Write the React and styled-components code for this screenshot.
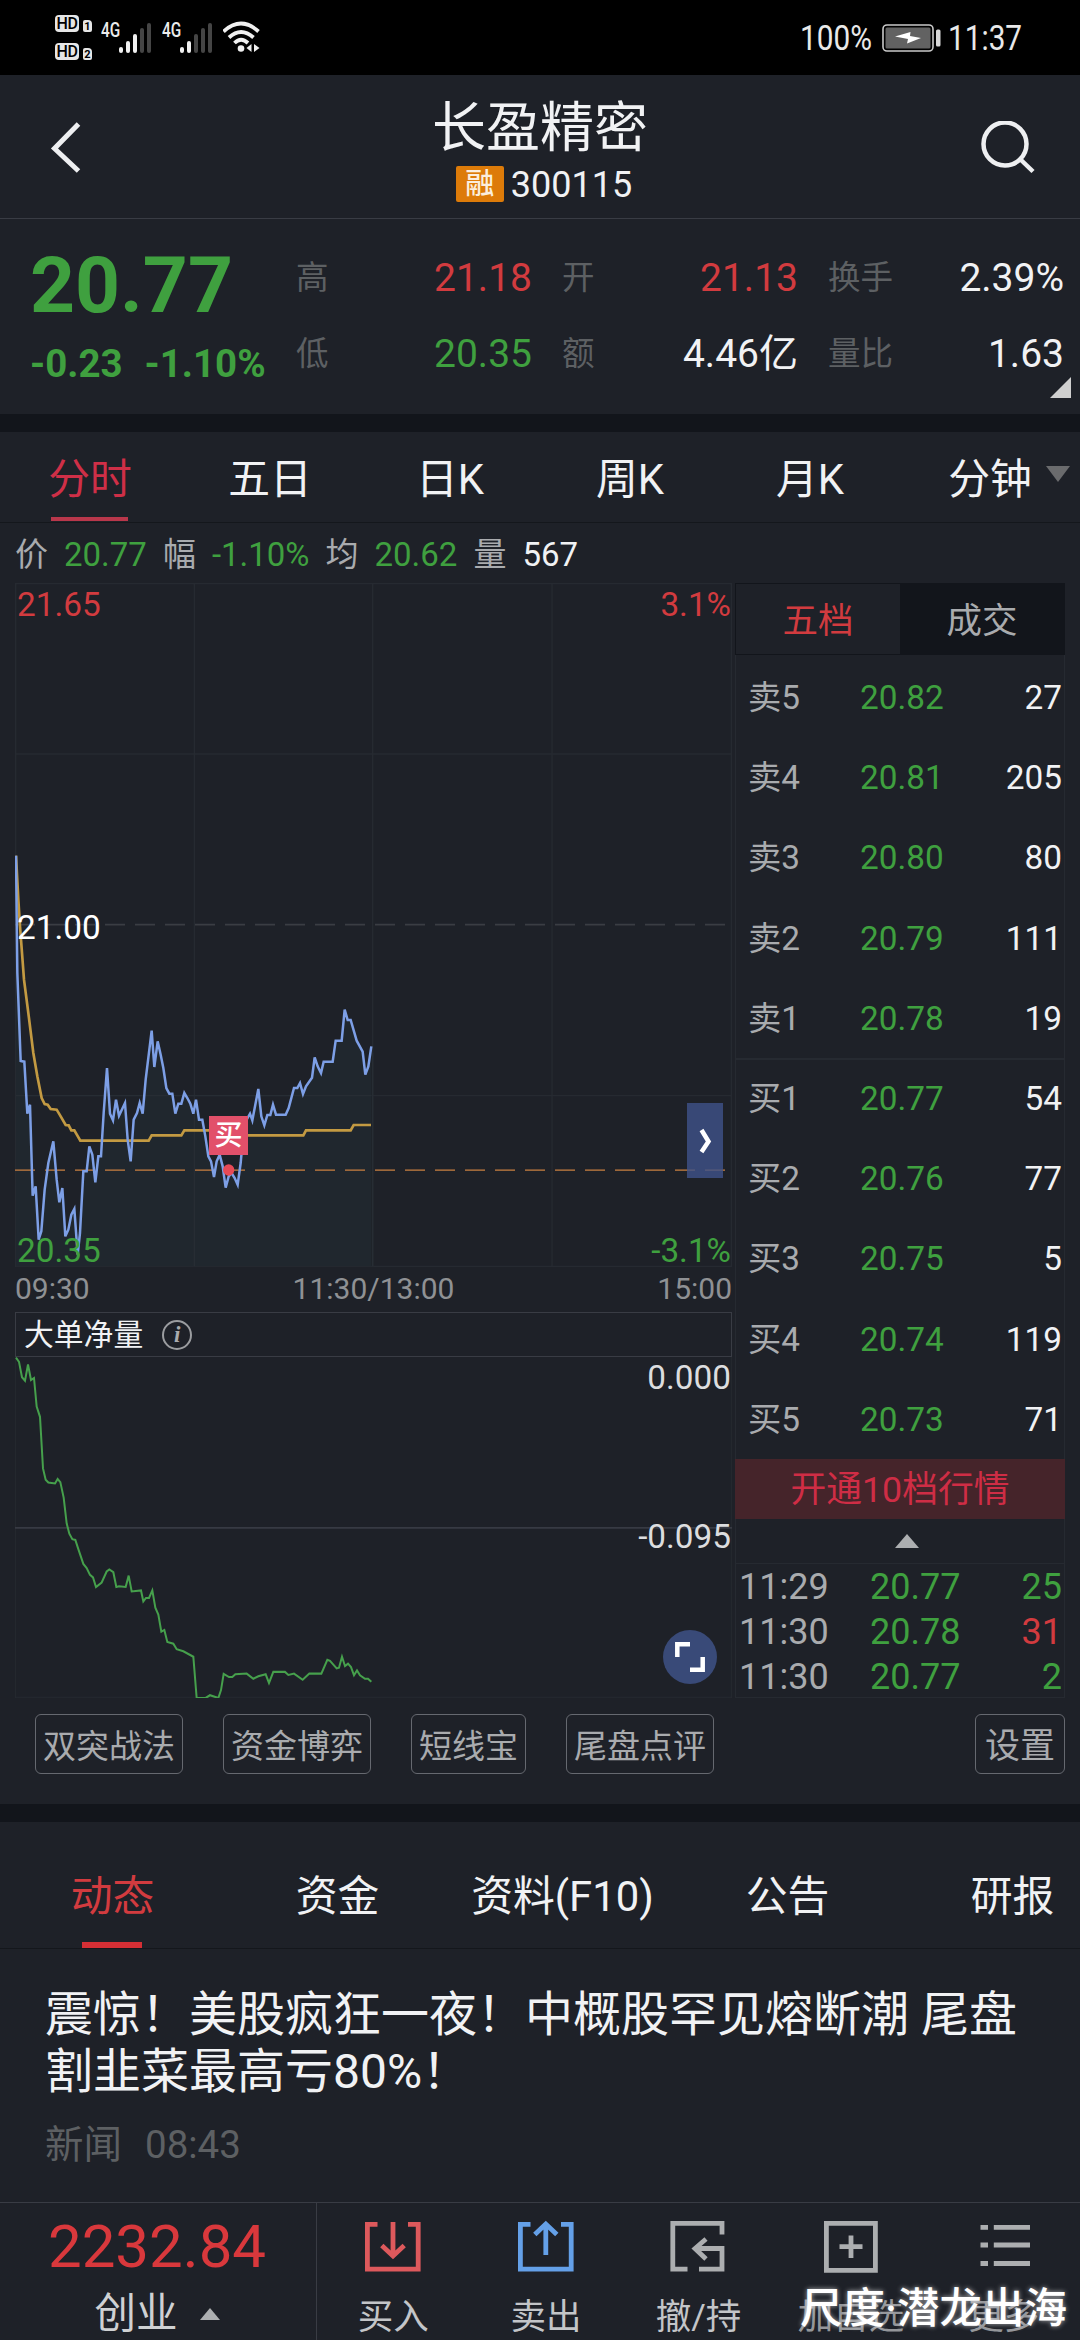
import React from "react";
import styled, { createGlobalStyle } from "styled-components";

const C = {
  bg: "#1e2128",
  band: "#12151b",
  green: "#3fa03f",
  red: "#d23b3f",
  white: "#f1f2f4",
  grey: "#a9abae",
  dim: "#5d6063",
  grid: "#262a31",
  line: "#393c44",
};

const Global = createGlobalStyle`
  * { box-sizing: border-box; }
  body { margin: 0; background: ${C.bg}; }
`;

const Page = styled.main`
  width: 1080px;
  height: 2340px;
  overflow: hidden;
  display: flex;
  flex-direction: column;
  background: ${C.bg};
  color: ${C.white};
  font-family: Roboto, "Noto Sans CJK SC", sans-serif;
  line-height: 1;
  white-space: nowrap;
  svg { display: block; flex: none; }
`;

/* ---------- status bar ---------- */

const StatusBar = styled.header`
  height: 75px;
  flex: none;
  background: #000;
  display: flex;
  justify-content: space-between;
  padding: 0 56px 0 55px;
`;

const StatusLeft = styled.div`
  display: flex;
  padding-top: 15px;
`;

const HdStack = styled.div`
  display: flex;
  flex-direction: column;
  gap: 11px;
  width: 46px;
`;

const HdRow = styled.div`
  display: flex;
  gap: 4px;
  align-items: flex-end;
`;

const HdBox = styled.span`
  width: 24px;
  height: 17px;
  border-radius: 4px;
  background: #e6e6e6;
  color: #000;
  font-size: 16px;
  font-weight: 500;
  line-height: 18px;
  letter-spacing: -0.5px;
  text-align: center;
`;

const SimBox = styled.span`
  width: 9px;
  height: 12px;
  border-radius: 2px 4px 2px 2px;
  background: #e6e6e6;
  color: #000;
  font-size: 11px;
  font-weight: 700;
  line-height: 13px;
  text-align: center;
`;

const Signal = styled.div`
  display: flex;
  width: 61px;
`;

const Net = styled.span`
  width: 18px;
  padding-top: 5px;
  font-size: 20px;
  font-weight: 500;
  color: #ececec;
  transform: scaleX(0.77);
  transform-origin: left;
  align-self: flex-start;
`;

const Bars = styled.div`
  display: flex;
  align-items: flex-end;
  gap: 3px;
  height: 31px;
  margin-top: 7px;
`;

const Bar = styled.i`
  width: 4px;
  border-radius: 2px;
  height: ${(p) => p.$h}px;
  background: ${(p) => (p.$on ? "#f0f0f0" : "#454545")};
`;

const WifiIcon = styled.svg`
  margin-top: 5px;
`;

const StatusRight = styled.div`
  display: flex;
  height: 76px;
  align-items: center;
`;

const Narrow = styled.span`
  width: ${(p) => p.$w}px;
  padding-top: 1px;
  font-size: 35px;
  color: #e9e9e9;
  transform: scaleX(0.85);
  transform-origin: left;
`;

const Clock = styled(Narrow)`
  margin: 0 -9px 0 7px;
`;

/* ---------- title bar ---------- */

const TitleBar = styled.div`
  height: 144px;
  flex: none;
  border-bottom: 1px solid ${C.line};
  display: flex;
  justify-content: space-between;
  padding: 46px 44px 0 50px;
`;

const TitleBlock = styled.div`
  display: flex;
  flex-direction: column;
  align-items: center;
  margin-top: -21px;
  margin-left: 18px;
`;

const Title = styled.h1`
  margin: 0;
  font-size: 54px;
  font-weight: 400;
  line-height: 58px;
`;

const CodeLine = styled.div`
  display: flex;
  align-items: center;
  gap: 7px;
  margin-top: 8px;
  padding-left: 8px;
  font-size: 36px;
  line-height: 38px;
`;

const Badge = styled.span`
  width: 48px;
  height: 36px;
  margin-top: -2px;
  border-radius: 2px;
  background: #dd7b09;
  color: #fbeedd;
  font-size: 29px;
  font-weight: 500;
  line-height: 37px;
  text-align: center;
`;

/* ---------- quote ---------- */

const Quote = styled.section`
  height: 195px;
  flex: none;
  position: relative;
  display: grid;
  grid-template-columns: 266px 236px 266px 266px;
  padding-left: 30px;
`;

const PriceCol = styled.div`
  color: ${C.green};
  font-weight: 700;
`;

const BigPrice = styled.div`
  font-size: 78.5px;
  line-height: 80px;
  margin-top: 26px;
`;

const Change = styled.div`
  display: flex;
  gap: 22px;
  font-size: 38.5px;
  line-height: 40px;
  margin-top: 19px;
`;

const StatCol = styled.div`
  display: grid;
  grid-template-rows: 76px 76px;
  padding-top: 21px;
  padding-left: ${(p) => p.$pad}px;
`;

const Stat = styled.div`
  display: flex;
  justify-content: space-between;
  align-items: center;
`;

const StatLabel = styled.span`
  font-size: 32.5px;
  color: ${C.dim};
`;

const StatValue = styled.span`
  font-size: 39px;
  color: ${(p) => p.$c || C.white};
`;

const Corner = styled.i`
  position: absolute;
  right: 9px;
  bottom: 16px;
  border-left: 21px solid transparent;
  border-bottom: 21px solid #cfcfcf;
`;

const Band = styled.div`
  height: 18px;
  flex: none;
  background: ${C.band};
`;

/* ---------- tabs ---------- */

const PeriodTabs = styled.nav`
  height: 91px;
  flex: none;
  display: grid;
  grid-template-columns: repeat(6, 180px);
  grid-template-rows: 90px;
  border-bottom: 1px solid #14171c;
`;

const PeriodTab = styled.div`
  position: relative;
  text-align: center;
  font-size: 41.8px;
  line-height: 95px;
  color: ${(p) => (p.$on ? "#cf2f47" : C.white)};
  &::after {
    content: "";
    display: ${(p) => (p.$on ? "block" : "none")};
    position: absolute;
    left: 51px;
    width: 77px;
    bottom: 1px;
    height: 4px;
    background: #b9374b;
  }
`;

const DropMark = styled.i`
  position: absolute;
  right: 10px;
  top: 34px;
  border: 12px solid transparent;
  border-top: 16px solid #6a6b6d;
  border-bottom: 0;
`;

const InfoLine = styled.div`
  height: 60px;
  flex: none;
  display: flex;
  align-items: center;
  gap: 16px;
  padding: 3px 0 0 15px;
  font-size: 33px;
`;

const Tone = styled.span`
  color: ${(p) => p.$c};
`;

/* ---------- main area ---------- */

const Main = styled.section`
  height: 1115px;
  flex: none;
  display: flex;
  gap: 3px;
  padding-left: 15px;
`;

const ChartCol = styled.div`
  width: 717px;
  display: flex;
  flex-direction: column;
`;

const PriceChart = styled.div`
  position: relative;
  height: 684px;
`;

const AxisLabel = styled.span`
  position: absolute;
  font-size: ${(p) => p.$s || 33.3}px;
  line-height: 34px;
  top: ${(p) => p.$top}px;
  ${(p) => (p.$right ? "right: 1px;" : "left: 2px;")}
  color: ${(p) => p.$c};
`;

const BuyTag = styled.span`
  position: absolute;
  left: 194px;
  top: 533px;
  width: 39px;
  height: 39px;
  background: #e2506a;
  color: #fff;
  font-size: 28px;
  font-weight: 500;
  line-height: 40px;
  text-align: center;
`;

const SideToggle = styled.button`
  position: absolute;
  left: 672px;
  top: 520px;
  width: 36px;
  height: 75px;
  padding: 0;
  border: 0;
  background: rgba(62, 83, 137, 0.8);
  display: flex;
  align-items: center;
  justify-content: center;
`;

const TimeAxis = styled.div`
  height: 45px;
  display: grid;
  grid-template-columns: 1fr auto 1fr;
  align-items: center;
  padding-bottom: 2px;
  font-size: 30px;
  color: #8f9194;
  span:last-child { text-align: right; }
`;

const FlowHead = styled.div`
  height: 45px;
  border: 1px solid ${C.line};
  display: flex;
  align-items: center;
  gap: 19px;
  padding-left: 8px;
  font-size: 29.8px;
`;

const InfoMark = styled.span`
  width: 30px;
  height: 30px;
  border: 2px solid #9b9da0;
  border-radius: 50%;
  color: #a9abae;
  font: italic 700 23px/25px "Liberation Serif", serif;
  text-align: center;
`;

const FlowChart = styled.div`
  position: relative;
  height: 341px;
`;

const FullButton = styled.button`
  position: absolute;
  right: 15px;
  bottom: 14px;
  width: 54px;
  height: 54px;
  padding: 0;
  border: 0;
  border-radius: 50%;
  background: #394a78;
  display: flex;
  align-items: center;
  justify-content: center;
`;

/* ---------- order book ---------- */

const Book = styled.aside`
  width: 330px;
  display: flex;
  flex-direction: column;
  border-left: 1px solid ${C.grid};
  border-right: 1px solid ${C.grid};
  border-bottom: 1px solid ${C.grid};
`;

const BookTabs = styled.div`
  height: 72px;
  flex: none;
  display: grid;
  grid-template-columns: 164px 1fr;
  grid-template-rows: 70px;
  border: 1px solid #12151b;
  margin: 0 -1px 2px;
`;

const BookTab = styled.div`
  font-size: 35.5px;
  line-height: 75px;
  text-align: center;
  background: ${(p) => (p.$on ? C.bg : C.band)};
  color: ${(p) => (p.$on ? C.red : C.grey)};
`;

const Levels = styled.div`
  height: 401px;
  flex: none;
  display: grid;
  grid-template-rows: repeat(5, 1fr);
  box-shadow: ${(p) => (p.$rule ? `0 2px 0 ${C.grid}` : "none")};
`;

const Level = styled.div`
  display: grid;
  grid-template-columns: 112px 1fr auto;
  align-items: center;
  padding: 1px 2px 0 12px;
  font-size: 33.3px;
`;

const OpenTen = styled.button`
  height: 60px;
  flex: none;
  margin: 0 -1px;
  padding: 0;
  border: 0;
  background: #45242a;
  color: #cf2d45;
  font: inherit;
  font-size: 35.8px;
  line-height: 63px;
`;

const Fold = styled.div`
  height: 45px;
  flex: none;
  border-bottom: 1px solid ${C.grid};
  display: flex;
  justify-content: center;
  padding: 15px 0 0 14px;
`;

const UpMark = styled.i`
  width: 0;
  height: 0;
  border: ${(p) => p.$w / 2}px solid transparent;
  border-bottom: ${(p) => p.$h}px solid #adafb1;
  border-top: 0;
`;

const Ticks = styled.div`
  display: grid;
  grid-auto-rows: 45px;
`;

const Tick = styled.div`
  display: grid;
  grid-template-columns: 131px 1fr auto;
  align-items: center;
  padding: 0 2px 0 3px;
  font-size: 36px;
`;

/* ---------- chips ---------- */

const Chips = styled.div`
  height: 106px;
  flex: none;
  display: flex;
  gap: 40px;
  padding: 16px 15px 0 35px;
`;

const Chip = styled.button`
  width: ${(p) => p.$w}px;
  height: 60px;
  padding: 2px 0 0;
  border: 1px solid #666970;
  border-radius: 6px;
  background: none;
  color: ${C.grey};
  font: inherit;
  font-size: ${(p) => p.$s || 33}px;
  line-height: 60px;
  &:last-child { margin-left: auto; }
`;

/* ---------- news ---------- */

const NewsTabs = styled.nav`
  height: 127px;
  flex: none;
  display: grid;
  grid-template-columns: repeat(5, 225px);
  grid-template-rows: 126px;
  border-bottom: 1px solid #14171c;
`;

const NewsTab = styled.div`
  position: relative;
  text-align: center;
  font-size: 41.8px;
  line-height: 150px;
  color: ${(p) => (p.$on ? C.red : C.white)};
  &::after {
    content: "";
    display: ${(p) => (p.$on ? "block" : "none")};
    position: absolute;
    left: 82px;
    width: 60px;
    bottom: 0;
    height: 6px;
    background: #d52f35;
  }
`;

const News = styled.article`
  height: 253px;
  flex: none;
  padding: 37px 60px 0 45px;
`;

const Headline = styled.p`
  margin: 0;
  font-size: 48px;
  line-height: 57px;
`;

const Meta = styled.div`
  display: flex;
  gap: 23px;
  margin-top: 22px;
  font-size: 38.5px;
  line-height: 46px;
  color: ${C.dim};
`;

/* ---------- bottom bar ---------- */

const BottomBar = styled.footer`
  height: 138px;
  flex: none;
  position: relative;
  display: grid;
  grid-template-columns: 317px repeat(5, 152.6px);
  border-top: 1px solid ${C.line};
`;

const IndexCell = styled.div`
  display: flex;
  flex-direction: column;
  align-items: center;
  padding: 13px 2px 0 0;
  border-right: 1px solid ${C.line};
`;

const IndexValue = styled.div`
  font-size: 60px;
  line-height: 62px;
  color: #d9383c;
`;

const IndexName = styled.div`
  display: flex;
  align-items: center;
  gap: 22px;
  font-size: 41.5px;
  line-height: 60px;
  margin-top: 6px;
  color: #cfd1d3;
`;

const Action = styled.div`
  display: flex;
  flex-direction: column;
  align-items: center;
  padding-top: 16px;
  color: ${(p) => p.$c || "#acaeb0"};
`;

const ActionLabel = styled.span`
  margin-top: 21px;
  font-size: 35.5px;
  line-height: 42px;
  color: ${(p) => (p.$dim ? "#94969a" : "#c3c5c8")};
`;

const Watermark = styled.div`
  position: absolute;
  right: 13px;
  top: 78px;
  font-size: 42.5px;
  line-height: 56px;
  font-weight: 500;
  color: #fff;
  text-shadow: 0 0 5px rgba(255, 255, 255, 0.65);
`;

/* ---------- data ---------- */

const PRICE =
  "48,48 52,400 62,664 73,666 82,822 90,795 98,1068 107,1040 116,1200 124,1175 134,1050 145,970 160,905 170,1020 178,1088 187,1045 196,1190 205,1170 214,1125 223,1108 233,1245 240,1180 250,995 260,995 268,920 277,945 286,1028 295,950 303,950 311,820 321,685 330,822 339,842 348,780 357,828 375,790 383,900 392,965 401,840 411,820 419,790 428,822 437,720 455,573 463,682 473,605 482,645 490,685 499,745 508,762 517,762 526,822 535,792 544,792 553,760 562,775 571,792 580,822 588,780 597,840 607,840 616,890 625,950 633,965 642,1012 650,965 659,945 668,980 677,1044 686,1010 695,1000 704,1015 713,1035 722,970 730,880 740,840 750,822 757,842 775,748 784,830 793,857 802,826 811,826 819,795 828,825 857,825 866,805 882,745 892,745 900,730 909,763 918,740 936,714 944,653 953,680 963,700 971,666 998,666 1007,603 1025,603 1034,510 1043,541 1052,541 1070,603 1088,636 1096,705 1105,680 1114,620";

const AVERAGE =
  "48,48 55,180 60,260 72,420 85,520 100,640 112,710 125,775 134,793 143,795 152,808 170,810 179,825 197,856 206,857 214,872 223,872 241,903 446,903 455,887 544,887 553,872 650,872 740,887 910,887 918,872 1052,872 1061,856 1113,856";

const FLOW =
  "48,283 57,295 66,340 75,350 84,303 93,348 102,342 110,425 120,455 129,605 137,638 145,646 165,649 173,636 181,645 191,690 200,765 208,795 217,811 226,813 235,840 250,883 260,895 270,915 279,922 288,950 305,937 320,905 328,899 340,907 349,950 357,948 377,950 386,917 395,963 423,960 430,992 438,982 447,982 457,960 466,1010 475,1030 484,1080 493,1075 502,1110 520,1115 530,1131 550,1137 580,1153 590,1273 617,1273 630,1265 655,1273 663,1250 671,1203 687,1212 697,1212 706,1204 740,1202 760,1217 775,1210 797,1204 807,1229 820,1197 855,1197 865,1206 882,1202 908,1220 928,1202 964,1202 982,1162 990,1165 1010,1187 1017,1185 1026,1153 1035,1180 1044,1173 1053,1183 1062,1207 1071,1193 1080,1207 1095,1217 1104,1217 1114,1226";

const SELLS = [
  ["卖5", "20.82", "27"],
  ["卖4", "20.81", "205"],
  ["卖3", "20.80", "80"],
  ["卖2", "20.79", "111"],
  ["卖1", "20.78", "19"],
];

const BUYS = [
  ["买1", "20.77", "54"],
  ["买2", "20.76", "77"],
  ["买3", "20.75", "5"],
  ["买4", "20.74", "119"],
  ["买5", "20.73", "71"],
];

const TICKS = [
  ["11:29", "20.77", "25", C.green],
  ["11:30", "20.78", "31", C.red],
  ["11:30", "20.77", "2", C.green],
];

const INFO = [
  ["价", C.grey],
  ["20.77", C.green],
  ["幅", C.grey],
  ["-1.10%", C.green],
  ["均", C.grey],
  ["20.62", C.green],
  ["量", C.grey],
  ["567", C.white],
];

const STATS = [
  [["高", "21.18", C.red], ["低", "20.35", C.green]],
  [["开", "21.13", C.red], ["额", "4.46亿", C.white]],
  [["换手", "2.39%", C.white], ["量比", "1.63", C.white]],
];

/* ---------- pieces ---------- */

function SignalIcon({ level }) {
  return (
    <Signal>
      <Net>4G</Net>
      <Bars>
        {[6, 12, 19, 25, 30].map((h, i) => (
          <Bar key={h} $h={h} $on={i < level} />
        ))}
      </Bars>
    </Signal>
  );
}

function ActionIcon({ children }) {
  return (
    <svg width="60" height="56" viewBox="0 0 60 56" fill="none" stroke="currentColor" strokeWidth="4.8">
      {children}
    </svg>
  );
}

function LevelRows({ rows, rule }) {
  return (
    <Levels $rule={rule}>
      {rows.map(([name, price, qty]) => (
        <Level key={name}>
          <Tone $c={C.grey}>{name}</Tone>
          <Tone $c={C.green}>{price}</Tone>
          <Tone $c={C.white}>{qty}</Tone>
        </Level>
      ))}
    </Levels>
  );
}

export default function App() {
  return (
    <Page>
      <Global />
      <StatusBar>
        <StatusLeft>
          <HdStack>
            <HdRow><HdBox>HD</HdBox><SimBox>1</SimBox></HdRow>
            <HdRow><HdBox>HD</HdBox><SimBox>2</SimBox></HdRow>
          </HdStack>
          <SignalIcon level={3} />
          <SignalIcon level={2} />
          <WifiIcon width="38" height="34" viewBox="0 0 38 34" fill="none" stroke="#f0f0f0" strokeWidth="3.8">
            <path d="M0.500 11.500Q18 -4.500 35.500 11.500" />
            <path d="M6 17.500Q18 6.500 30.500 17.500" />
            <path d="M11.500 23Q18 16.500 25 23" />
            <circle cx="18" cy="28.500" r="3.300" fill="#f0f0f0" stroke="none" />
            <path d="M28.500 24v8l-5-4zM31 24v8l5.500-4z" fill="#f0f0f0" stroke="none" />
          </WifiIcon>
        </StatusLeft>
        <StatusRight>
          <Narrow $w={82}>100%</Narrow>
          <svg width="59" height="28" viewBox="0 0 59 28">
            <rect x="1" y="1" width="50" height="26" rx="4" fill="none" stroke="#c9c9c9" strokeWidth="1.600" />
            <rect x="3.500" y="3.500" width="45" height="21" rx="1.500" fill="#626262" />
            <path d="M13 12.500 26 15 25 19.500 39 14 28 12 28.500 8z" fill="#fff" />
            <rect x="54" y="5.500" width="4.500" height="17" rx="1.500" fill="#d8d8d8" />
          </svg>
          <Clock $w={85}>11:37</Clock>
        </StatusRight>
      </StatusBar>

      <TitleBar>
        <svg width="32" height="60" viewBox="0 0 32 60" fill="none" stroke="#eeeff1" strokeWidth="5">
          <path d="M28.500 3 4.500 27.500 28.500 50" />
        </svg>
        <TitleBlock>
          <Title>长盈精密</Title>
          <CodeLine><Badge>融</Badge>300115</CodeLine>
        </TitleBlock>
        <svg width="56" height="56" viewBox="0 0 56 56" fill="none" stroke="#eeeff1" strokeWidth="4.500">
          <circle cx="25" cy="23" r="21.500" />
          <path d="M40 38 53 50.500" />
        </svg>
      </TitleBar>

      <Quote>
        <PriceCol>
          <BigPrice>20.77</BigPrice>
          <Change><span>-0.23</span><span>-1.10%</span></Change>
        </PriceCol>
        {STATS.map((col, i) => (
          <StatCol key={i} $pad={i ? 30 : 0}>
            {col.map(([label, value, color]) => (
              <Stat key={label}>
                <StatLabel>{label}</StatLabel>
                <StatValue $c={color}>{value}</StatValue>
              </Stat>
            ))}
          </StatCol>
        ))}
        <Corner />
      </Quote>

      <Band />

      <PeriodTabs>
        <PeriodTab $on>分时</PeriodTab>
        <PeriodTab>五日</PeriodTab>
        <PeriodTab>日K</PeriodTab>
        <PeriodTab>周K</PeriodTab>
        <PeriodTab>月K</PeriodTab>
        <PeriodTab>分钟<DropMark /></PeriodTab>
      </PeriodTabs>

      <InfoLine>
        {INFO.map(([text, color], i) => (
          <Tone key={i} $c={color}>{text}</Tone>
        ))}
      </InfoLine>

      <Main>
        <ChartCol>
          <PriceChart>
            <svg width="717" height="684" viewBox="45 -770 2151 2052" fill="none">
              <path d="M47 -769V1280M583 -769V1280M1118 -769V1280M1656 -769V1280M2194 -769V1280M45 -768H2196M45 -257H2196M45 768H2196M45 1280H2196" stroke={C.grid} strokeWidth="4" />
              <polygon points={`${PRICE} 1114,1280 48,1280`} fill="#20272e" />
              <path d="M583 800V1280M1118 640V1280M48 768H1114" stroke="#272d34" strokeWidth="4" />
              <path d="M45 255H2196" stroke="#3a3d43" strokeWidth="5" strokeDasharray="60 30" />
              <path d="M45 991.500H2175" stroke="#c98040" strokeWidth="3.500" strokeDasharray="60 30" />
              <polyline points={AVERAGE} stroke="#c39a42" strokeWidth="8" />
              <polyline points={PRICE} stroke="#7d9fe6" strokeWidth="7.500" />
              <circle cx="686" cy="991" r="17" fill="#e84a56" />
            </svg>
            <AxisLabel $top={5} $c={C.red}>21.65</AxisLabel>
            <AxisLabel $top={5} $right $c={C.red}>3.1%</AxisLabel>
            <AxisLabel $top={328} $c="#ffffff">21.00</AxisLabel>
            <AxisLabel $top={651} $c={C.green}>20.35</AxisLabel>
            <AxisLabel $top={651} $right $c={C.green}>-3.1%</AxisLabel>
            <BuyTag>买</BuyTag>
            <SideToggle aria-label="展开">
              <svg width="14" height="26" viewBox="0 0 14 26" fill="none" stroke="#fff" strokeWidth="4.500">
                <path d="M3.500 2 10.500 13.500 3.500 24" />
              </svg>
            </SideToggle>
          </PriceChart>
          <TimeAxis>
            <span>09:30</span>
            <span>11:30/13:00</span>
            <span>15:00</span>
          </TimeAxis>
          <FlowHead>大单净量<InfoMark>i</InfoMark></FlowHead>
          <FlowChart>
            <svg width="717" height="341" viewBox="45 281 2151 992" preserveAspectRatio="none" fill="none">
              <path d="M46 281V1273M45 1271H2196M2194 281V1273" stroke={C.grid} strokeWidth="3" />
              <path d="M45 778H2196" stroke="#373a43" strokeWidth="5" />
              <polyline points={FLOW} stroke="#46a04c" strokeWidth="6" />
            </svg>
            <AxisLabel $top={4} $right $c="#dcdddf">0.000</AxisLabel>
            <AxisLabel $top={163} $right $c="#dcdddf">-0.095</AxisLabel>
            <FullButton aria-label="全屏">
              <svg width="32" height="32" viewBox="0 0 32 32" fill="none" stroke="#fff" strokeWidth="4.500">
                <path d="M3.300 16V3.300H16M16 28.700H28.700V16" />
              </svg>
            </FullButton>
          </FlowChart>
        </ChartCol>

        <Book>
          <BookTabs>
            <BookTab $on>五档</BookTab>
            <BookTab>成交</BookTab>
          </BookTabs>
          <LevelRows rows={SELLS} rule />
          <LevelRows rows={BUYS} />
          <OpenTen>开通10档行情</OpenTen>
          <Fold><UpMark $w={24} $h={14} /></Fold>
          <Ticks>
            {TICKS.map(([time, price, qty, color], i) => (
              <Tick key={i}>
                <Tone $c={C.grey}>{time}</Tone>
                <Tone $c={C.green}>{price}</Tone>
                <Tone $c={color}>{qty}</Tone>
              </Tick>
            ))}
          </Ticks>
        </Book>
      </Main>

      <Chips>
        <Chip $w={148}>双突战法</Chip>
        <Chip $w={148}>资金博弈</Chip>
        <Chip $w={115}>短线宝</Chip>
        <Chip $w={148}>尾盘点评</Chip>
        <Chip $w={90} $s={35}>设置</Chip>
      </Chips>

      <Band />

      <NewsTabs>
        <NewsTab $on>动态</NewsTab>
        <NewsTab>资金</NewsTab>
        <NewsTab>资料(F10)</NewsTab>
        <NewsTab>公告</NewsTab>
        <NewsTab>研报</NewsTab>
      </NewsTabs>

      <News>
        <Headline>震惊！美股疯狂一夜！中概股罕见熔断潮 尾盘<br />割韭菜最高亏80%！</Headline>
        <Meta><span>新闻</span><span>08:43</span></Meta>
      </News>

      <BottomBar>
        <IndexCell>
          <IndexValue>2232.84</IndexValue>
          <IndexName>创业<UpMark $w={21} $h={12} /></IndexName>
        </IndexCell>
        <Action $c="#dd595c">
          <ActionIcon>
            <path d="M14.500 5.400H4.400V50.100H55.200V5.400H45M30 3V36M18.800 26.500 30 37 41.200 26.500" />
          </ActionIcon>
          <ActionLabel>买入</ActionLabel>
        </Action>
        <Action $c="#64a0e8">
          <ActionIcon>
            <path d="M14.500 5.400H4.400V50.100H55.200V5.400H45M29.800 36V6M18.800 15.500 29.800 5 40.800 15.500" />
          </ActionIcon>
          <ActionLabel>卖出</ActionLabel>
        </Action>
        <Action>
          <ActionIcon>
            <path d="M19.500 50.100H4.800V4.400H54V15.500M31 50.100H54V29.500H27M38 20 27 29.500 38 40" />
          </ActionIcon>
          <ActionLabel>撤/持</ActionLabel>
        </Action>
        <Action>
          <ActionIcon>
            <path d="M5.400 4.300H54.400V51.300H5.400ZM30 16.500V39M18.500 27.700H41.500" />
          </ActionIcon>
          <ActionLabel $dim>加自选</ActionLabel>
        </Action>
        <Action>
          <ActionIcon>
            <path d="M6.500 8.300H14M19.800 8.300H56M6.500 26H14M19.800 26H56M6.500 44.500H14M19.800 44.500H56" />
          </ActionIcon>
          <ActionLabel $dim>更多</ActionLabel>
        </Action>
        <Watermark>尺度·潜龙出海</Watermark>
      </BottomBar>
    </Page>
  );
}
